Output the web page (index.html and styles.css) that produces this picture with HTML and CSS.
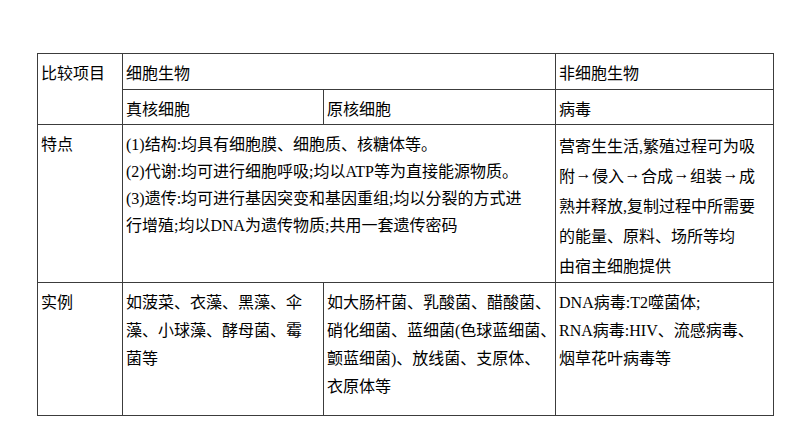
FILE: index.html
```html
<!DOCTYPE html>
<html lang="zh-CN">
<head>
<meta charset="utf-8">
<title>比较</title>
<link rel="stylesheet" href="styles.css">
</head>
<body>
<table class="cmp">
  <colgroup>
    <col class="c1"><col class="c2"><col class="c3"><col class="c4">
  </colgroup>
  <tr class="r1">
    <td rowspan="2">比较项目</td>
    <td colspan="2">细胞生物</td>
    <td>非细胞生物</td>
  </tr>
  <tr class="r2">
    <td>真核细胞</td>
    <td>原核细胞</td>
    <td>病毒</td>
  </tr>
  <tr class="r3">
    <td>特点</td>
    <td colspan="2" class="feat">(1)结构:均具有细胞膜、细胞质、核糖体等。<br>(2)代谢:均可进行细胞呼吸;均以ATP等为直接能源物质。<br>(3)遗传:均可进行基因突变和基因重组;均以分裂的方式进<br>行增殖;均以DNA为遗传物质;共用一套遗传密码</td>
    <td class="virus">营寄生生活,繁殖过程可为吸<br>附<span class="arr">→</span>侵入<span class="arr">→</span>合成<span class="arr">→</span>组装<span class="arr">→</span>成<br>熟并释放,复制过程中所需要<br>的能量、原料、场所等均<br>由宿主细胞提供</td>
  </tr>
  <tr class="r4">
    <td>实例</td>
    <td>如菠菜、衣藻、黑藻、伞<br>藻、小球藻、酵母菌、霉<br>菌等</td>
    <td>如大肠杆菌、乳酸菌、醋酸菌、<br>硝化细菌、蓝细菌(色球蓝细菌、<br>颤蓝细菌)、放线菌、支原体、<br>衣原体等</td>
    <td>DNA病毒:T2噬菌体;<br>RNA病毒:HIV、流感病毒、<br>烟草花叶病毒等</td>
  </tr>
</table>
</body>
</html>
```

FILE: styles.css
```css
html, body {
  margin: 0;
  padding: 0;
  background: #ffffff;
}
body {
  padding: 53px 0 0 37px;
  font-family: "Liberation Serif", "Noto Sans CJK SC", serif;
  font-size: 16px;
  color: #000;
}
.cmp {
  border-collapse: collapse;
  table-layout: fixed;
  width: 736px;
}
.c1 { width: 85px; }
.c2 { width: 201px; }
.c3 { width: 232px; }
.c4 { width: 218px; }
.cmp td {
  border: 1px solid #3c3c3c;
  vertical-align: top;
  padding: 6px 3px 0 3px;
  line-height: 28px;
  white-space: nowrap;
  overflow: visible;
  box-sizing: border-box;
}
.r1 td { height: 36px; }
.r2 td { height: 35px; }
.r3 td { height: 157px; }
.r4 td { height: 133px; }
.cmp td.feat { line-height: 27px; }
.cmp td.virus { line-height: 30px; padding-top: 7px; }
.arr {
  font-family: "Liberation Serif", serif;
  display: inline-block;
  width: 17px;
  text-align: center;
  vertical-align: 3px;
  line-height: 16px;
}
```
